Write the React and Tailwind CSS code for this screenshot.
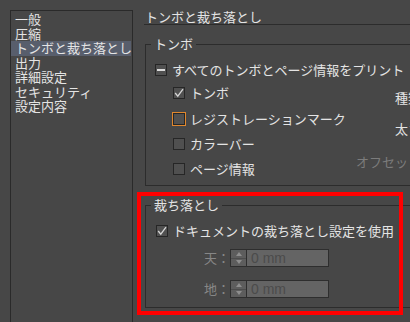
import React from "react";

function Box({ state, focus }) {
  return (
    <span
      className={
        "flex h-[12px] w-[12px] shrink-0 items-center justify-center border border-[#262626] bg-[#505050] " +
        (focus ? "outline outline-1 outline-[#e0872e]" : "")
      }
    >
      {state === "checked" && (
        <svg width="10" height="10" viewBox="0 0 10 10">
          <polyline points="1.2,5 3.8,8.2 9,1.2" fill="none" stroke="#d6d6d6" strokeWidth="1.3" />
        </svg>
      )}
      {state === "mixed" && <span className="h-[2px] w-[8px] bg-[#dcdcdc]" />}
    </span>
  );
}

function Row({ state, focus, children, className }) {
  return (
    <div className={"flex h-[20px] items-center gap-[5px] whitespace-nowrap " + (className || "")}>
      <Box state={state} focus={focus} />
      <span className="leading-[14px]">{children}</span>
    </div>
  );
}

function Field({ label, className }) {
  return (
    <div className={"ml-[49px] flex h-[18px] items-center " + (className || "")}>
      <span className="w-[26px] leading-[14px] text-[#878787]">{label}：</span>
      <div className="flex h-[18px] w-[99px] border border-[#2e2e2e]">
        <div className="flex w-[16px] flex-col border-r border-[#2e2e2e] bg-[#5d5d5d]">
          <div className="flex flex-1 items-center justify-center border-b border-[#4c4c4c]">
            <span className="h-0 w-0 border-x-[3px] border-b-[4px] border-x-transparent border-b-[#8e8e8e]" />
          </div>
          <div className="flex flex-1 items-center justify-center">
            <span className="h-0 w-0 border-x-[3px] border-t-[4px] border-x-transparent border-t-[#8e8e8e]" />
          </div>
        </div>
        <div className="flex-1 bg-[#646464] pl-[4px] font-['Liberation_Sans',sans-serif] text-[14px] leading-[16px] text-[#4b4b4b]">
          0 mm
        </div>
      </div>
    </div>
  );
}

export default function App() {
  const items = ["一般", "圧縮", "トンボと裁ち落とし", "出力", "詳細設定", "セキュリティ", "設定内容"];
  return (
    <div className="relative flex h-[322px] w-[410px] overflow-hidden bg-[#474747] font-['Noto_Sans_CJK_JP','Noto_Sans',sans-serif] text-[13px] text-[#e4e4e4]">
      <div className="ml-[10px] mt-[10px] h-[330px] w-[123px] shrink-0 border border-[#2a2a2a] pr-[1px] pt-[1px]">
        {items.map((t, i) => (
          <div
            key={t}
            className={
              "h-[14.5px] whitespace-nowrap pl-[4px] leading-[14.5px] " + (i === 2 ? "bg-[#585e6c]" : "")
            }
          >
            {t}
          </div>
        ))}
      </div>

      <div className="min-w-0 flex-1 pl-[11px]">
        <div className="whitespace-nowrap border-b border-[#2c2c2c] pl-[1px] pt-[10px] leading-[14px]">
          トンボと裁ち落とし
        </div>

        <fieldset className="ml-[1px] mt-[12px] w-[320px] border border-[#2c2c2c] pb-[6px] pl-[5px] pt-[9px]">
          <legend className="px-[3px] leading-[14px]">トンボ</legend>
          <div className="flex pl-[4px]">
            <div className="w-[201px] shrink-0">
              <Row state="mixed">すべてのトンボとページ情報をプリント</Row>
              <Row state="checked" className="mt-[3px] pl-[18px]">トンボ</Row>
              <Row focus className="mt-[6px] pl-[18px]">レジストレーションマーク</Row>
              <Row className="mt-[5px] pl-[18px]">カラーバー</Row>
              <Row className="mt-[5px] pl-[18px]">ページ情報</Row>
            </div>
            <div className="w-[78px] shrink-0 whitespace-nowrap text-right leading-[14px]">
              <div className="mt-[31px]">種類：</div>
              <div className="mt-[17px]">太さ：</div>
              <div className="mt-[19px] text-[#7c7c7c]">オフセット：</div>
            </div>
          </div>
        </fieldset>

        <fieldset className="ml-[1px] mt-[12px] w-[320px] border border-[#2c2c2c] pb-[9px] pl-[5px] pt-[9px]">
          <legend className="px-[3px] leading-[14px]">裁ち落とし</legend>
          <div className="pl-[4px]">
            <Row state="checked" className="pl-[1px]">ドキュメントの裁ち落とし設定を使用</Row>
            <Field label="天" className="mt-[8px]" />
            <Field label="地" className="mt-[13px]" />
          </div>
        </fieldset>
      </div>

      <div className="pointer-events-none absolute left-[137px] top-[192px] h-[123px] w-[266px] border-4 border-[#ff0000]" />
    </div>
  );
}
